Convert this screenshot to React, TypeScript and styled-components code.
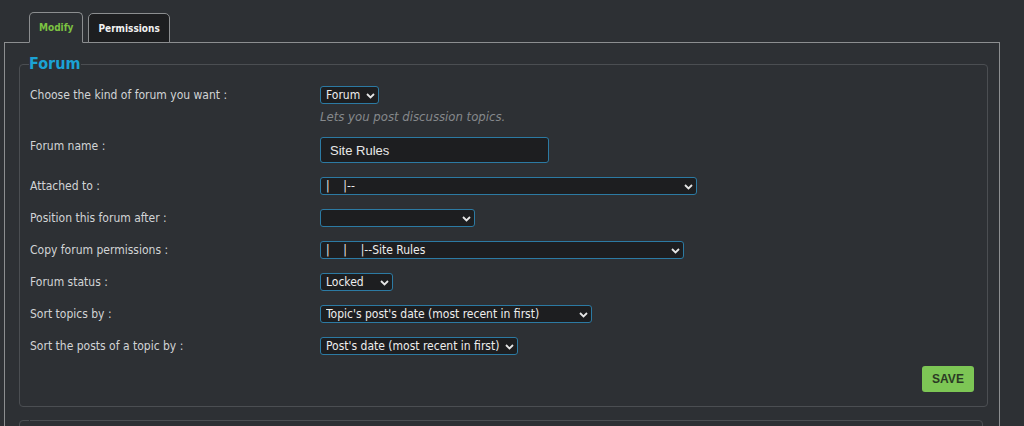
import styled, { createGlobalStyle } from 'styled-components';

const GlobalStyle = createGlobalStyle`
  html, body {
    margin: 0;
    padding: 0;
    background: #2d3034;
    height: 100%;
    overflow: hidden;
  }
`;

const StyledPage = styled.div`
  height: 100vh;
  box-sizing: border-box;
  display: flex;
  flex-direction: column;
  padding: 12px 24px 0 4px;
  font-family: 'DejaVu Sans Condensed', 'DejaVu Sans', sans-serif;
  color: #d2d4d6;
  overflow: hidden;
`;

const StyledTabs = styled.div`
  display: flex;
  gap: 5px;
  padding-left: 25px;
  position: relative;
  z-index: 1;
`;

const StyledTab = styled.div<{ $active?: boolean }>`
  box-sizing: border-box;
  padding: 0 9px;
  display: flex;
  align-items: center;
  font-size: 10px;
  font-weight: bold;
  border: 1px solid #8c8e90;
  border-bottom: ${(p) => (p.$active ? '1px solid #2d3034' : '1px solid #8c8e90')};
  border-radius: 5px 5px 0 0;
  background: ${(p) => (p.$active ? '#2d3034' : '#1d1e20')};
  color: ${(p) => (p.$active ? '#7cc242' : '#f2f2f2')};
  height: ${(p) => (p.$active ? '31px' : '30px')};
  margin-bottom: -1px;
  align-self: flex-end;
`;

const StyledPanel = styled.div`
  flex: 1;
  min-height: 0;
  border: 1px solid #8c8e90;
  border-bottom: none;
  padding: 12px 11px 0 14px;
  box-sizing: border-box;
  display: flex;
  flex-direction: column;
  gap: 13px;
  overflow: hidden;
`;

const StyledFieldset = styled.fieldset<{ $last?: boolean }>`
  margin: 0;
  border: 1px solid #4b4e52;
  border-radius: 4px;
  padding: 6px 13px 14px 10px;
  margin-right: ${(p) => (p.$last ? '5px' : '0')};
  min-width: 0;
  flex-shrink: 0;
`;

const StyledLegend = styled.legend`
  padding: 0 1px 0 0;
  margin-left: -1px;
  font-family: 'DejaVu Sans Condensed', 'DejaVu Sans', sans-serif;
  font-size: 16px;
  font-weight: bold;
  line-height: 18px;
  color: #1ba2d4;
`;

const StyledRow = styled.div<{ $bottom?: number }>`
  display: grid;
  grid-template-columns: 290px 1fr;
  align-items: start;
  padding: 7px 0 ${(p) => p.$bottom ?? 7}px 0;
`;

const StyledLabel = styled.div`
  font-size: 12px;
  line-height: 16px;
  padding-top: 1px;
  color: #d2d4d6;
`;

const StyledControl = styled.div`
  display: flex;
  flex-direction: column;
  align-items: flex-start;
`;

const StyledHelp = styled.div`
  font-family: 'DejaVu Sans Condensed', 'DejaVu Sans', sans-serif;
  font-style: italic;
  font-size: 13px;
  line-height: 16px;
  margin-top: 5px;
  color: #86898c;
`;

const StyledSelectWrap = styled.div<{ $width: number }>`
  position: relative;
  width: ${(p) => p.$width}px;
  height: 18px;
`;

const StyledSelect = styled.select`
  appearance: none;
  display: block;
  width: 100%;
  height: 100%;
  box-sizing: border-box;
  margin: 0;
  padding: 0 16px 0 5px;
  border: 1px solid #2c7aa3;
  border-radius: 3px;
  background: #1d1e20;
  color: #ededed;
  font-family: 'DejaVu Sans Condensed', 'DejaVu Sans', sans-serif;
  font-size: 12px;
  line-height: 16px;
  outline: none;
`;

const StyledChevron = styled.svg`
  position: absolute;
  right: 4px;
  top: 7px;
  pointer-events: none;
`;

const StyledInput = styled.input`
  display: block;
  width: 229px;
  height: 26px;
  box-sizing: border-box;
  margin: 0;
  padding: 0 9px;
  border: 1px solid #2c7aa3;
  border-radius: 3px;
  background: #1d1e20;
  color: #e8e8e8;
  font-family: 'Liberation Sans', Arial, sans-serif;
  font-size: 13px;
  outline: none;
`;

const StyledActions = styled.div`
  display: flex;
  justify-content: flex-end;
  padding-top: 4px;
`;

const StyledSaveButton = styled.button`
  width: 52px;
  height: 26px;
  border: none;
  border-radius: 3px;
  background: #7dc655;
  color: #2b3a24;
  font-family: 'Liberation Sans', Arial, sans-serif;
  font-size: 12px;
  font-weight: bold;
  cursor: pointer;
`;

const nb = (s: string) => s.replace(/ /g, '\u00a0');

const Select = ({ width, value }: { width: number; value: string }) => (
  <StyledSelectWrap $width={width}>
    <StyledSelect defaultValue={value}>
      <option value={value}>{nb(value)}</option>
    </StyledSelect>
    <StyledChevron width="9" height="6" viewBox="0 0 9 6">
      <path d="M1 1l3.5 3.5L8 1" fill="none" stroke="#e6e6e6" strokeWidth="1.8" />
    </StyledChevron>
  </StyledSelectWrap>
);

const rows: { label: string; width: number; value: string }[] = [
  { label: 'Attached to :', width: 377, value: '|    |--' },
  { label: 'Position this forum after :', width: 155, value: '' },
  { label: 'Copy forum permissions :', width: 364, value: '|    |    |--Site Rules' },
  { label: 'Forum status :', width: 73, value: 'Locked' },
  { label: 'Sort topics by :', width: 272, value: "Topic's post's date (most recent in first)" },
  { label: 'Sort the posts of a topic by :', width: 198, value: "Post's date (most recent in first)" },
];

const App = () => {
  return (
    <StyledPage>
      <GlobalStyle />
      <StyledTabs>
        <StyledTab $active>Modify</StyledTab>
        <StyledTab>Permissions</StyledTab>
      </StyledTabs>
      <StyledPanel>
        <StyledFieldset>
          <StyledLegend>Forum</StyledLegend>
          <StyledRow $bottom={5}>
            <StyledLabel>Choose the kind of forum you want :</StyledLabel>
            <StyledControl>
              <Select width={59} value="Forum" />
              <StyledHelp>Lets you post discussion topics.</StyledHelp>
            </StyledControl>
          </StyledRow>
          <StyledRow $bottom={7}>
            <StyledLabel>Forum name :</StyledLabel>
            <StyledControl>
              <StyledInput defaultValue="Site Rules" />
            </StyledControl>
          </StyledRow>
          {rows.map((row) => (
            <StyledRow key={row.label}>
              <StyledLabel>{row.label}</StyledLabel>
              <StyledControl>
                <Select width={row.width} value={row.value} />
              </StyledControl>
            </StyledRow>
          ))}
          <StyledActions>
            <StyledSaveButton>SAVE</StyledSaveButton>
          </StyledActions>
        </StyledFieldset>
        <StyledFieldset $last>
          <StyledLegend />
        </StyledFieldset>
      </StyledPanel>
    </StyledPage>
  );
};

export default App;
